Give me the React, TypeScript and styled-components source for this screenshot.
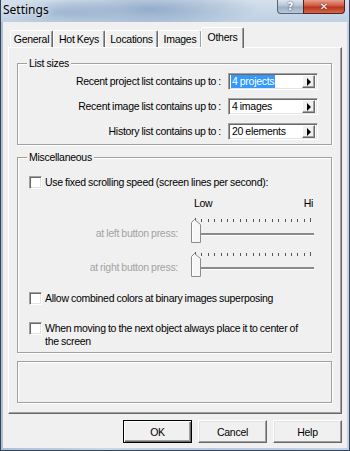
import React from "react";
import styled, { createGlobalStyle, css } from "styled-components";

const UI_FONT = `"Liberation Sans", Arial, sans-serif`;

const GlobalStyle = createGlobalStyle`
  html, body {
    margin: 0;
    padding: 0;
    background: #f0f0f0;
  }
  * {
    box-sizing: border-box;
  }
`;

const Window = styled.div`
  width: 350px;
  height: 451px;
  display: flex;
  flex-direction: column;
  overflow: hidden;
  background: linear-gradient(90deg, #aebfd2 0%, #c9d7e6 30%, #b6c8dc 60%, #c4d3e3 100%);
  border: 1px solid #34445c;
  border-top: none;
  font-family: ${UI_FONT};
  font-size: 10.5px;
  letter-spacing: -0.28px;
  word-spacing: -0.4px;
`;

const TitleBar = styled.div`
  height: 22px;
  flex: 0 0 22px;
  display: flex;
  align-items: flex-start;
  justify-content: space-between;
  background: radial-gradient(ellipse 110px 20px at 150px 9px, rgba(80, 118, 168, 0.45), transparent),
    radial-gradient(ellipse 60px 14px at 60px 12px, rgba(90, 125, 170, 0.3), transparent),
    linear-gradient(180deg, #d4e0ec 0%, #bfd0e2 100%);
`;

const Title = styled.span`
  margin: 3px 0 0 2px;
  font-family: "Noto Sans", ${UI_FONT};
  font-size: 12px;
  letter-spacing: 0;
  word-spacing: 0;
  line-height: 14px;
  color: #000;
  text-shadow: 0 0 6px rgba(255, 255, 255, 0.9);
`;

const CaptionButtons = styled.div`
  display: flex;
  margin-right: 4px;
`;

const CaptionButton = styled.div<{ $close?: boolean }>`
  height: 14px;
  width: ${(p) => (p.$close ? "42px" : "26px")};
  display: flex;
  align-items: center;
  justify-content: center;
  border: 1px solid ${(p) => (p.$close ? "#5a1f1a" : "#56657a")};
  border-top: none;
  border-radius: ${(p) => (p.$close ? "0 0 4px 0" : "0 0 0 4px")};
  ${(p) =>
    p.$close
      ? css`
          background: linear-gradient(180deg, #e6a08f 0%, #d0573e 45%, #b7351d 55%, #cf6a4f 100%);
        `
      : css`
          background: linear-gradient(180deg, #dbe5ef 0%, #b4c4d6 45%, #9caec4 55%, #b9c9da 100%);
          border-right: none;
        `}
  color: #fff;
  font-family: "DejaVu Sans", sans-serif;
  font-weight: bold;
  font-size: 10px;
  letter-spacing: 0;
  text-shadow: 0 0 2px #333;
`;

const Client = styled.div`
  flex: 1;
  margin: 0 2px 2px 2px;
  background: #f0f0f0;
  display: flex;
  flex-direction: column;
  padding: 5px 5px 0 5px;
`;

const TabStrip = styled.div`
  display: flex;
  align-items: flex-end;
  height: 20px;
  padding-left: 2px;
  position: relative;
  z-index: 1;
`;

const Tab = styled.div<{ $active?: boolean; $w: number }>`
  width: ${(p) => p.$w}px;
  height: ${(p) => (p.$active ? "21px" : "17px")};
  margin-bottom: ${(p) => (p.$active ? "-1px" : "0")};
  line-height: ${(p) => (p.$active ? "18px" : "17px")};
  text-align: center;
  color: #000;
  background: #f0f0f0;
  border-left: 1px solid #fff;
  border-top: 1px solid #fff;
  border-right: 1px solid #696969;
  border-radius: 2px 2px 0 0;
  box-shadow: inset -1px 0 0 #a0a0a0;
  ${(p) =>
    p.$active &&
    css`
      margin-left: -1px;
      margin-right: -1px;
      width: ${p.$w + 2}px;
    `}
`;

const Panel = styled.div`
  height: 367px;
  border-top: 1px solid #fff;
  border-left: 1px solid #fff;
  border-right: 1px solid #696969;
  border-bottom: 1px solid #696969;
  box-shadow: inset -1px -1px 0 #a0a0a0;
  padding: 9px 9px 0 8px;
  display: flex;
  flex-direction: column;
`;

const etched = css`
  border: 1px solid #a0a0a0;
  box-shadow: inset 1px 1px 0 #fff, 1px 1px 0 #fff;
`;

const GroupBox = styled.fieldset<{ $gap?: number }>`
  ${etched};
  margin: ${(p) => p.$gap ?? 0}px 0 0 0;
  padding: 0 0 4px 9px;
  min-width: 0;
`;

const Legend = styled.legend`
  padding: 0 2px;
  line-height: 13px;
  color: #000;
  background: #f0f0f0;
`;

const SizeRow = styled.div`
  display: flex;
  align-items: center;
  justify-content: flex-end;
  gap: 7px;
  padding-right: 13px;
  margin-top: 8px;
  &:first-of-type {
    margin-top: 3px;
  }
`;

const RowLabel = styled.span<{ $disabled?: boolean }>`
  line-height: 13px;
  color: ${(p) => (p.$disabled ? "#a3a3a3" : "#000")};
  white-space: nowrap;
`;

const Combo = styled.div`
  width: 90px;
  height: 17px;
  background: #fff;
  border: 1px solid;
  border-color: #a0a0a0 #fff #fff #a0a0a0;
  box-shadow: inset 1px 1px 0 #696969, inset -1px -1px 0 #e3e3e3;
  display: flex;
  align-items: center;
  padding: 0 2px 0 2px;
`;

const ComboValue = styled.div`
  flex: 1;
  display: flex;
`;

const ComboText = styled.span<{ $selected?: boolean }>`
  line-height: 13px;
  padding: 0 1px;
  color: ${(p) => (p.$selected ? "#fff" : "#000")};
  background: ${(p) => (p.$selected ? "#3399ff" : "transparent")};
`;

const SpinButton = styled.div`
  width: 13px;
  height: 13px;
  background: #f0f0f0;
  border: 1px solid;
  border-color: #fff #696969 #696969 #fff;
  box-shadow: inset -1px -1px 0 #a0a0a0;
  display: flex;
  align-items: center;
  justify-content: center;
  &::after {
    content: "";
    width: 0;
    height: 0;
    margin-left: 1px;
    border-left: 4px solid #000;
    border-top: 4px solid transparent;
    border-bottom: 4px solid transparent;
  }
`;

const CheckRow = styled.label<{ $top: number }>`
  display: flex;
  align-items: flex-start;
  gap: 3px;
  margin-top: ${(p) => p.$top}px;
  padding-left: 2px;
  line-height: 13px;
  color: #000;
  white-space: nowrap;
`;

const CheckBox = styled.span`
  width: 13px;
  height: 13px;
  flex: 0 0 13px;
  background: #fff;
  border: 1px solid;
  border-color: #a0a0a0 #fff #fff #a0a0a0;
  box-shadow: inset 1px 1px 0 #696969, inset -1px -1px 0 #e3e3e3;
`;

const ScaleLabels = styled.div`
  display: flex;
  justify-content: space-between;
  width: 119px;
  margin: 8px 0 0 167px;
  line-height: 13px;
  color: #000;
`;

const SliderRow = styled.div<{ $top: number }>`
  display: flex;
  align-items: flex-start;
  gap: 13px;
  margin-top: ${(p) => p.$top}px;
`;

const SliderLabel = styled(RowLabel)`
  width: 151px;
  flex: 0 0 151px;
  text-align: right;
  margin-top: 10px;
`;

const EmptyBox = styled.div`
  ${etched};
  height: 42px;
  margin-top: 8px;
`;

const ButtonBar = styled.div`
  display: flex;
  justify-content: flex-end;
  gap: 6px;
  margin-top: 6px;
`;

const DialogButton = styled.div<{ $default?: boolean }>`
  width: 69px;
  height: 23px;
  display: flex;
  align-items: center;
  justify-content: center;
  color: #000;
  background: #f0f0f0;
  border: 1px solid;
  border-color: #fff #696969 #696969 #fff;
  box-shadow: inset -1px -1px 0 #a0a0a0, inset 1px 1px 0 #e3e3e3;
  ${(p) =>
    p.$default &&
    css`
      border: 1px solid #000;
      box-shadow: inset 1px 1px 0 #fff, inset -1px -1px 0 #696969, inset -2px -2px 0 #a0a0a0;
    `}
`;

const TICKS = 19;

const Slider = () => {
  const ticks = Array.from({ length: TICKS }, (_, i) => 4 + i * 6.4);
  return (
    <svg width="124" height="28" viewBox="0 0 124 28">
      {ticks.map((x, i) => (
        <rect
          key={i}
          x={Math.round(x)}
          y={i === 0 || i === TICKS - 1 ? 1 : 2}
          width="1"
          height={i === 0 || i === TICKS - 1 ? 4 : 3}
          fill="#555"
        />
      ))}
      <rect x="8" y="16" width="115" height="2" fill="#8a8a8a" />
      <rect x="8" y="18" width="115" height="1" fill="#fff" />
      <polygon points="0.5,5.5 3.5,2.5 9.5,7.5 9.5,25.5 0.5,25.5" fill="#f7f7f7" stroke="#8c8c8c" />
      <polyline points="1.5,24.5 1.5,6 3.5,4" fill="none" stroke="#fff" />
    </svg>
  );
};

const sizes = [
  { label: "Recent project list contains up to :", value: "4 projects", selected: true },
  { label: "Recent image list contains up to :", value: "4 images" },
  { label: "History list contains up to :", value: "20 elements" },
];

const tabs = [
  { name: "General", w: 43 },
  { name: "Hot Keys", w: 52 },
  { name: "Locations", w: 53 },
  { name: "Images", w: 44 },
  { name: "Others", w: 41, active: true },
];

const App = () => {
  return (
    <>
      <GlobalStyle />
      <Window>
        <TitleBar>
          <Title>Settings</Title>
          <CaptionButtons>
            <CaptionButton>?</CaptionButton>
            <CaptionButton $close>✕</CaptionButton>
          </CaptionButtons>
        </TitleBar>
        <Client>
          <TabStrip>
            {tabs.map((t) => (
              <Tab key={t.name} $w={t.w} $active={t.active}>
                {t.name}
              </Tab>
            ))}
          </TabStrip>
          <Panel>
            <GroupBox>
              <Legend>List sizes</Legend>
              {sizes.map((s) => (
                <SizeRow key={s.label}>
                  <RowLabel>{s.label}</RowLabel>
                  <Combo>
                    <ComboValue>
                      <ComboText $selected={s.selected}>{s.value}</ComboText>
                    </ComboValue>
                    <SpinButton />
                  </Combo>
                </SizeRow>
              ))}
            </GroupBox>

            <GroupBox $gap={6}>
              <Legend>Miscellaneous</Legend>
              <CheckRow $top={12}>
                <CheckBox />
                <span>Use fixed scrolling speed (screen lines per second):</span>
              </CheckRow>
              <ScaleLabels>
                <span>Low</span>
                <span>Hi</span>
              </ScaleLabels>
              <SliderRow $top={7}>
                <SliderLabel $disabled>at left button press:</SliderLabel>
                <Slider />
              </SliderRow>
              <SliderRow $top={6}>
                <SliderLabel $disabled>at right button press:</SliderLabel>
                <Slider />
              </SliderRow>
              <CheckRow $top={13}>
                <CheckBox />
                <span>Allow combined colors at binary images superposing</span>
              </CheckRow>
              <CheckRow $top={17}>
                <CheckBox />
                <span>
                  When moving to the next object always place it to center of
                  <br />
                  the screen
                </span>
              </CheckRow>
            </GroupBox>

            <EmptyBox />
          </Panel>
          <ButtonBar>
            <DialogButton $default>OK</DialogButton>
            <DialogButton>Cancel</DialogButton>
            <DialogButton>Help</DialogButton>
          </ButtonBar>
        </Client>
      </Window>
    </>
  );
};

export default App;
